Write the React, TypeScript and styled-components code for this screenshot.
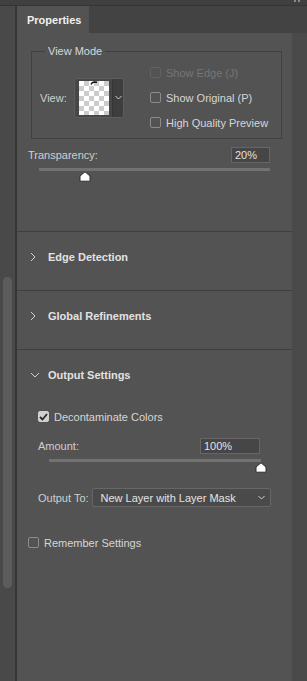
import styled, { createGlobalStyle } from "styled-components";

const GlobalStyle = createGlobalStyle`
  html, body {
    margin: 0;
    padding: 0;
    background: #535353;
  }
  body {
    font-family: "Liberation Sans", Arial, sans-serif;
    font-size: 11px;
    color: #d4d4d4;
  }
  * { box-sizing: border-box; }
`;

const Frame = styled.div`
  width: 307px;
  height: 681px;
  display: flex;
  flex-direction: column;
  background: #535353;
  overflow: hidden;
`;

const TopStrip = styled.div`
  height: 6px;
  background: #404040;
  border-bottom: 1px solid #343434;
  display: flex;
  justify-content: flex-end;
  padding-right: 6px;
`;

const Body = styled.div`
  flex: 1;
  display: flex;
  min-height: 0;
`;

const LeftRail = styled.div`
  width: 17px;
  background: #494949;
  border-right: 2px solid #363636;
  padding-top: 271px;
  padding-left: 3px;
`;

const ScrollThumb = styled.div`
  width: 9px;
  height: 311px;
  border-radius: 5px;
  background: #5c5c5c;
`;

const Main = styled.div`
  flex: 1;
  display: flex;
  flex-direction: column;
`;

const TabBar = styled.div`
  height: 28px;
  display: flex;
  background: #434343;
  border-bottom: 1px solid #3a3a3a;
`;

const Tab = styled.div`
  width: 72px;
  height: 28px;
  background: #535353;
  display: flex;
  align-items: center;
  padding-left: 10px;
  font-weight: bold;
  font-size: 11px;
  color: #f0f0f0;
`;

const ContentRow = styled.div`
  flex: 1;
  display: flex;
  margin-top: -1px;
`;

const Panel = styled.div`
  width: 275px;
  display: flex;
  flex-direction: column;
  background: #535353;
`;

const RightRail = styled.div`
  flex: 1;
  background: #4a4a4a;
`;

const Group = styled.fieldset`
  margin: 12px 10px 0 14px;
  padding: 2px 8px 3px 8px;
  border: 1px solid #404040;
  min-width: 0;
`;

const Legend = styled.legend`
  margin-left: 5px;
  padding: 0 3px;
  line-height: 13px;
  color: #d8d8d8;
`;

const ViewRow = styled.div`
  display: flex;
  align-items: center;
`;

const ViewLabel = styled.span`
  width: 34px;
  color: #cfcfcf;
`;

const Thumb = styled.div`
  width: 50px;
  height: 40px;
  display: flex;
  border: 1px solid #5d5d5d;
  border-radius: 3px;
  background: #474747;
  overflow: hidden;
`;

const Checker = styled.div`
  width: 30px;
  height: 34px;
  margin: 2px 3px 2px 4px;
  display: flex;
  justify-content: center;
  background: repeating-conic-gradient(#cccccc 0 25%, #ffffff 0 50%) 0 0 / 10px 10px;
`;

const ThumbArrow = styled.div`
  flex: 1;
  display: flex;
  align-items: center;
  justify-content: center;
  background: #3e3e3e;
  border-left: 1px solid #353535;
`;

const OptionList = styled.div`
  display: flex;
  flex-direction: column;
  margin-left: 26px;
`;

const CheckRow = styled.label<{ $disabled?: boolean }>`
  height: 25px;
  display: flex;
  align-items: center;
  gap: 5px;
  color: ${(p) => (p.$disabled ? "#767676" : "#d6d6d6")};
`;

const Box = styled.span<{ $checked?: boolean; $disabled?: boolean }>`
  width: 11px;
  height: 11px;
  border-radius: 2px;
  border: 1px solid ${(p) => (p.$disabled ? "#626262" : p.$checked ? "#d0d0d0" : "#8c8c8c")};
  background: ${(p) => (p.$checked ? "#d0d0d0" : "transparent")};
  display: flex;
  align-items: center;
  justify-content: center;
`;

const FieldRow = styled.div<{ $left: number; $right: number; $top: number }>`
  display: flex;
  align-items: center;
  justify-content: space-between;
  margin-top: ${(p) => p.$top}px;
  padding: 0 ${(p) => p.$right}px 0 ${(p) => p.$left}px;
`;

const NumberBox = styled.div<{ $width: number }>`
  width: ${(p) => p.$width}px;
  height: 16px;
  display: flex;
  align-items: center;
  padding-left: 3px;
  background: #464646;
  border: 1px solid #666666;
  color: #e2e2e2;
`;

const SliderTrack = styled.div<{ $left: number; $right: number; $top: number }>`
  position: relative;
  height: 3px;
  margin: ${(p) => p.$top}px ${(p) => p.$right}px 0 ${(p) => p.$left}px;
  background: #727272;
`;

const SliderThumb = styled.svg`
  position: absolute;
  top: 3px;
  margin-left: -6px;
`;

const Section = styled.div<{ $open?: boolean; $top?: number }>`
  border-top: 1px solid #3f3f3f;
  margin-top: ${(p) => p.$top ?? 0}px;
  padding-bottom: ${(p) => (p.$open ? 0 : 8)}px;
`;

const SectionHeader = styled.div`
  height: 50px;
  display: flex;
  align-items: center;
  padding-left: 13px;
  font-weight: bold;
  color: #e2e2e2;
`;

const ChevronSlot = styled.span`
  width: 18px;
  display: flex;
  align-items: center;
`;

const SectionBody = styled.div`
  display: flex;
  flex-direction: column;
`;

const CheckLine = styled.label<{ $left: number; $top: number }>`
  display: flex;
  align-items: center;
  gap: 5px;
  height: 15px;
  margin-top: ${(p) => p.$top}px;
  padding-left: ${(p) => p.$left}px;
  color: #d6d6d6;
`;

const OutputRow = styled.div`
  display: flex;
  align-items: center;
  gap: 3px;
  margin-top: 26px;
  padding-left: 21px;
`;

const Select = styled.div`
  width: 179px;
  height: 19px;
  display: flex;
  align-items: center;
  justify-content: space-between;
  padding: 0 5px 0 8px;
  background: #4a4a4a;
  border: 1px solid #676767;
  border-radius: 2px;
  color: #e4e4e4;
`;

const Label = styled.span`
  color: #cfcfcf;
`;

const Chevron = ({ dir }: { dir: "right" | "down" }) =>
  dir === "right" ? (
    <svg width="6" height="10" viewBox="0 0 6 10">
      <polyline points="1,1 5,5 1,9" fill="none" stroke="#cfcfcf" strokeWidth="1" />
    </svg>
  ) : (
    <svg width="10" height="6" viewBox="0 0 10 6">
      <polyline points="1,1 5,5 9,1" fill="none" stroke="#cfcfcf" strokeWidth="1" />
    </svg>
  );

const SmallChevron = () => (
  <svg width="7" height="5" viewBox="0 0 7 5">
    <polyline points="0.5,1 3.5,4 6.5,1" fill="none" stroke="#cfcfcf" strokeWidth="1" />
  </svg>
);

const Tick = () => (
  <svg width="9" height="8" viewBox="0 0 9 8">
    <polyline points="1,4 3.5,6.5 8,1" fill="none" stroke="#2a2a2a" strokeWidth="1.8" />
  </svg>
);

function Slider({ value, left, right, top }: { value: number; left: number; right: number; top: number }) {
  return (
    <SliderTrack $left={left} $right={right} $top={top}>
      <SliderThumb width="12" height="11" viewBox="0 0 12 11" style={{ left: `${value}%` }}>
        <path d="M6 0.8 L11 5 L11 10.2 L1 10.2 L1 5 Z" fill="#ffffff" stroke="#2e2e2e" strokeWidth="1" strokeLinejoin="round" />
      </SliderThumb>
    </SliderTrack>
  );
}

function Check({ label, checked, disabled }: { label: string; checked?: boolean; disabled?: boolean }) {
  return (
    <CheckRow $disabled={disabled}>
      <Box $checked={checked} $disabled={disabled}>{checked && <Tick />}</Box>
      {label}
    </CheckRow>
  );
}

export default function App() {
  return (
    <>
      <GlobalStyle />
      <Frame>
        <TopStrip>
          <svg width="7" height="3" viewBox="0 0 7 3">
            <rect x="0" y="0" width="2" height="2" fill="#8a8a8a" />
            <rect x="4" y="0" width="2" height="2" fill="#8a8a8a" />
          </svg>
        </TopStrip>
        <Body>
          <LeftRail>
            <ScrollThumb />
          </LeftRail>
          <Main>
            <TabBar>
              <Tab>Properties</Tab>
            </TabBar>
            <ContentRow>
              <Panel>
                <Group>
                  <Legend>View Mode</Legend>
                  <ViewRow>
                    <ViewLabel>View:</ViewLabel>
                    <Thumb>
                      <Checker>
                        <svg width="8" height="4" viewBox="0 0 8 4">
                          <path d="M1 3.5 Q2 1 4.5 1 L7 1.2" fill="none" stroke="#111" strokeWidth="1.4" />
                        </svg>
                      </Checker>
                      <ThumbArrow>
                        <SmallChevron />
                      </ThumbArrow>
                    </Thumb>
                    <OptionList>
                      <Check label="Show Edge (J)" disabled />
                      <Check label="Show Original (P)" />
                      <Check label="High Quality Preview" />
                    </OptionList>
                  </ViewRow>
                </Group>

                <FieldRow $left={11} $right={22} $top={8}>
                  <Label>Transparency:</Label>
                  <NumberBox $width={39}>20%</NumberBox>
                </FieldRow>
                <Slider value={20} left={22} right={22} top={5} />

                <Section $top={60}>
                  <SectionHeader>
                    <ChevronSlot><Chevron dir="right" /></ChevronSlot>
                    Edge Detection
                  </SectionHeader>
                </Section>
                <Section>
                  <SectionHeader>
                    <ChevronSlot><Chevron dir="right" /></ChevronSlot>
                    Global Refinements
                  </SectionHeader>
                </Section>
                <Section $open>
                  <SectionHeader>
                    <ChevronSlot><Chevron dir="down" /></ChevronSlot>
                    Output Settings
                  </SectionHeader>
                  <SectionBody>
                    <CheckLine $left={21} $top={9}>
                      <Box $checked><Tick /></Box>
                      Decontaminate Colors
                    </CheckLine>
                    <FieldRow $left={21} $right={32} $top={14}>
                      <Label>Amount:</Label>
                      <NumberBox $width={60}>100%</NumberBox>
                    </FieldRow>
                    <Slider value={100} left={32} right={31} top={5} />
                    <OutputRow>
                      <Label>Output To:</Label>
                      <Select>
                        New Layer with Layer Mask
                        <SmallChevron />
                      </Select>
                    </OutputRow>
                  </SectionBody>
                </Section>
                <CheckLine $left={11} $top={28}>
                  <Box />
                  Remember Settings
                </CheckLine>
              </Panel>
              <RightRail />
            </ContentRow>
          </Main>
        </Body>
      </Frame>
    </>
  );
}
